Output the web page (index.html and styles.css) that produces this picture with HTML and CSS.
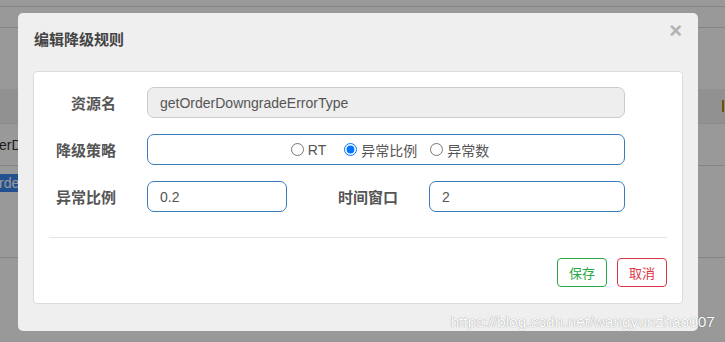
FILE: index.html
```html
<!DOCTYPE html>
<html lang="zh-CN">
<head>
    <meta charset="UTF-8">
    <meta name="viewport" content="width=device-width, initial-scale=1.0">
    <title>编辑降级规则</title>
    <link rel="stylesheet" href="styles.css">
</head>
<body>
    <div class="page">
        <div class="topbar"></div>
        <div class="navbar"></div>
        <div class="toolbar"></div>
        <div class="table-head">
            <span></span>
            <span class="head-op"></span>
        </div>
        <div class="table-row">
            <span class="cell">erD</span>
        </div>
        <div class="table-row tall">
            <span class="cell selected">rder</span>
        </div>
    </div>

    <div class="overlay">
        <div class="modal">
            <div class="modal-header">
                <h4 class="modal-title">编辑降级规则</h4>
                <span class="close">×</span>
            </div>
            <div class="panel">
                <div class="form-row">
                    <label class="form-label">资源名</label>
                    <input class="form-input wide" type="text" value="getOrderDowngradeErrorType" disabled>
                </div>
                <div class="form-row">
                    <label class="form-label">降级策略</label>
                    <div class="radio-box wide">
                        <label class="radio first"><input type="radio" name="grade">RT</label>
                        <label class="radio"><input type="radio" name="grade" checked>异常比例</label>
                        <label class="radio"><input type="radio" name="grade">异常数</label>
                    </div>
                </div>
                <div class="form-row">
                    <label class="form-label">异常比例</label>
                    <input class="form-input short" type="text" value="0.2">
                    <label class="form-label second">时间窗口</label>
                    <input class="form-input medium" type="text" value="2">
                </div>
                <div class="divider"></div>
                <div class="actions">
                    <button class="btn btn-save">保存</button>
                    <button class="btn btn-cancel">取消</button>
                </div>
            </div>
        </div>
        <div class="watermark">https://blog.csdn.net/wangyunzhao007</div>
    </div>
</body>
</html>
```

FILE: styles.css
```css
body {
    margin: 0;
    width: 725px;
    height: 342px;
    overflow: hidden;
    position: relative;
    font-family: "Liberation Sans", "Noto Sans CJK SC", sans-serif;
    background-color: #fff;
    color: #333;
}
.page {
    height: 342px;
}
.topbar {
    height: 6px;
    border-bottom: 1px solid #ddd;
    background-color: #fff;
}
.navbar {
    height: 20px;
    border-bottom: 1px solid #ddd;
}
.toolbar {
    height: 61px;
}
.table-head {
    height: 34px;
    background-color: #f2f2f2;
    display: flex;
    justify-content: space-between;
    align-items: center;
    border-bottom: 1px solid #e8e8e8;
}
.head-op {
    width: 3px;
    height: 12px;
    border-left: 2px solid #b08a1a;
    box-sizing: border-box;
}
.table-row {
    height: 41px;
    border-bottom: 1px solid #ddd;
    display: flex;
    align-items: center;
}
.table-row.tall {
    height: 91px;
    align-items: flex-start;
}
.cell {
    font-size: 14px;
    color: #333;
    margin-left: -1px;
}
.table-row.tall .cell {
    margin-top: 8px;
    line-height: 18px;
}
.cell.selected {
    background-color: #3a86f0;
    color: #fff;
}
.overlay {
    position: absolute;
    inset: 0;
    background-color: rgba(0, 0, 0, 0.4);
}
.modal {
    position: absolute;
    left: 18px;
    top: 13px;
    width: 680px;
    height: 318px;
    box-sizing: border-box;
    padding: 0 15px;
    background-color: #efefef;
    border-radius: 5px;
}
.modal-header {
    height: 58px;
    box-sizing: border-box;
    padding-top: 17px;
    padding-left: 1px;
    position: relative;
}
.modal-title {
    margin: 0;
    font-size: 15px;
    line-height: 20px;
    font-weight: bold;
    color: #444;
}
.close {
    position: absolute;
    right: 1px;
    top: 6px;
    font-size: 22px;
    font-weight: bold;
    color: #b3b3b3;
    line-height: 24px;
}
.panel {
    height: 233px;
    box-sizing: border-box;
    background-color: #fff;
    border: 1px solid #dcdcdc;
    border-radius: 4px;
    padding: 15px 15px 15px;
}
.form-row {
    display: flex;
    align-items: center;
    height: 31px;
    margin-bottom: 16px;
}
.form-label {
    width: 67px;
    text-align: right;
    font-size: 15px;
    font-weight: bold;
    color: #555;
    margin-right: 31px;
}
.form-label.second {
    width: 61px;
    text-align: left;
    margin-left: 51px;
    margin-right: 30px;
}
.form-input {
    height: 31px;
    box-sizing: border-box;
    border: 1px solid #3a7bbd;
    border-radius: 7px;
    padding: 0 12px;
    font-family: "Liberation Sans", sans-serif;
    font-size: 14px;
    color: #555;
    background-color: #fff;
    outline: none;
}
.form-input:disabled {
    background-color: #eee;
    border-color: #ccc;
    color: #555;
}
.wide {
    width: 478px;
}
.short {
    width: 140px;
}
.medium {
    width: 196px;
}
.radio-box {
    height: 31px;
    box-sizing: border-box;
    border: 1px solid #3a7bbd;
    border-radius: 7px;
    display: flex;
    justify-content: center;
    align-items: center;
    padding-left: 8px;
}
.radio {
    display: flex;
    align-items: center;
    font-size: 14px;
    color: #555;
    margin-right: 13px;
}
.radio.first {
    margin-right: 18px;
}
.radio:last-child {
    margin-right: 0;
}
.radio input {
    margin: 0 4px 0 0;
    width: 13px;
    height: 13px;
}
.divider {
    height: 1px;
    background-color: #e5e5e5;
    margin: 25px 0 20px;
}
.actions {
    display: flex;
    justify-content: flex-end;
    gap: 10px;
}
.btn {
    width: 50px;
    height: 29px;
    box-sizing: border-box;
    background-color: #fff;
    border: 1px solid;
    border-radius: 4px;
    font-family: "Noto Sans CJK SC", sans-serif;
    font-size: 13px;
    padding: 0;
}
.btn-save {
    border-color: #28a745;
    color: #28a745;
}
.btn-cancel {
    border-color: #dc3545;
    color: #dc3545;
}
.watermark {
    position: absolute;
    right: 10px;
    bottom: 11px;
    font-size: 15.5px;
    color: #fff;
    text-shadow: 0 0 1px rgba(0, 0, 0, 0.5);
}
```
